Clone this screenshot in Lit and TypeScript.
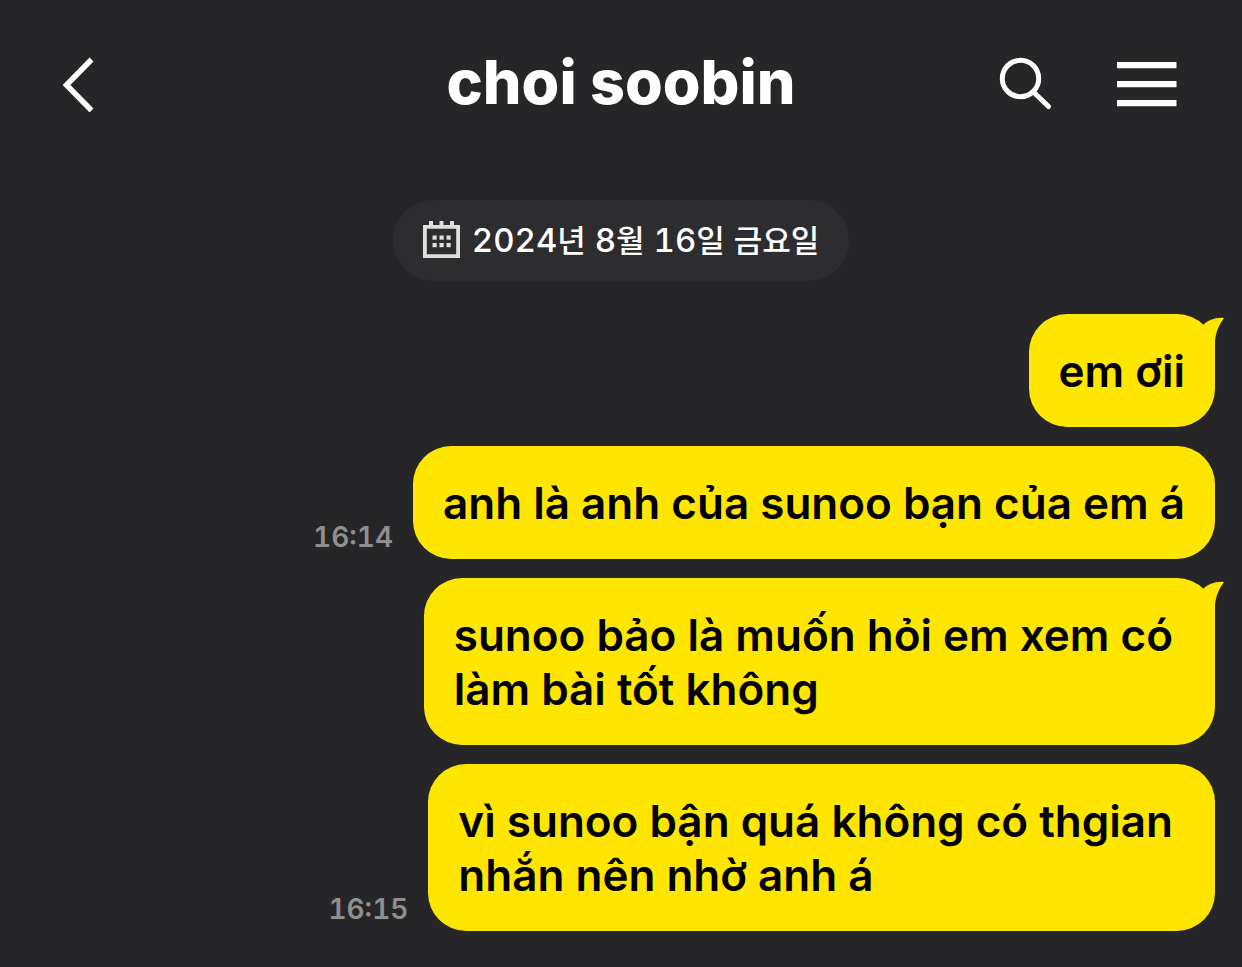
import { LitElement, html, css, svg, nothing } from "lit";
import { customElement, property } from "lit/decorators.js";

interface Message {
  text: string;
  time?: string;
  tail?: boolean;
}

const MESSAGES: Message[] = [
  { text: "em ơii", tail: true },
  { text: "anh là anh của sunoo bạn của em á", time: "16:14" },
  { text: "sunoo bảo là muốn hỏi em xem có\nlàm bài tốt không", tail: true },
  { text: "vì sunoo bận quá không có thgian\nnhắn nên nhờ anh á", time: "16:15" },
];

@customElement("chat-header")
export class ChatHeader extends LitElement {
  @property() name = "";

  static styles = css`
    :host {
      display: block;
    }
    .bar {
      display: grid;
      grid-template-columns: 1fr auto 1fr;
      align-items: center;
      padding: 44px 60px 0;
    }
    .title {
      margin: 0;
      font-size: 61px;
      line-height: 76px;
      font-weight: 800;
      color: #fff;
    }
    .actions {
      display: flex;
      justify-content: flex-end;
      gap: 58px;
    }
    .icon {
      display: block;
      padding: 0;
      border: 0;
      background: none;
      color: #fff;
      cursor: pointer;
    }
    .back {
      justify-self: start;
    }
    .icon svg {
      display: block;
    }
  `;

  render() {
    return html`
      <header class="bar">
        <button class="icon back" aria-label="Back">
          <svg width="40" height="60" viewBox="0 0 40 60" fill="none" stroke="currentColor" stroke-width="5.5">
            <path d="M31.5 7.5 L6.5 33 L31.5 58.5" />
          </svg>
        </button>
        <h1 class="title">${this.name}</h1>
        <div class="actions">
          <button class="icon" aria-label="Search">
            <svg width="60" height="60" viewBox="0 0 60 60" fill="none" stroke="currentColor" stroke-width="5">
              <circle cx="22.5" cy="26.5" r="18.2" />
              <path d="M35.5 40 L50.5 54.5" stroke-linecap="round" />
            </svg>
          </button>
          <button class="icon" aria-label="Menu">
            <svg width="66" height="60" viewBox="0 0 66 60" fill="currentColor">
              <path d="M1 10h59.5v6.3H1zM1 29h59.5v6.3H1zM1 48h59.5v6.3H1z" />
            </svg>
          </button>
        </div>
      </header>
    `;
  }
}

@customElement("date-pill")
export class DatePill extends LitElement {
  @property({ type: Number }) year = 0;
  @property({ type: Number }) month = 0;
  @property({ type: Number }) day = 0;
  @property() weekday = "";

  static styles = css`
    :host {
      display: flex;
      justify-content: center;
    }
    .pill {
      display: flex;
      align-items: center;
      gap: 12px;
      padding: 16px 30px;
      border-radius: 40px;
      background: #2d2d2f;
      color: #fff;
      font-size: 33px;
      line-height: 48px;
      font-weight: 500;
      font-variant-numeric: tabular-nums;
    }
    .unit {
      font-size: 31px;
    }
    .calendar {
      display: block;
      color: #dededf;
    }
  `;

  render() {
    return html`
      <div class="pill">
        <svg class="calendar" width="37" height="39" viewBox="0 0 37 39" fill="currentColor" aria-hidden="true">
          <path fill-rule="evenodd" d="M0 4h37v33H0zM3.8 7.8v25.4h29.4V7.8z" />
          <path d="M6 0h4v5h-4zM16.5 0h4v5h-4zM27 0h4v5h-4z" />
          ${[9.5, 16.5, 23.5].map((x) =>
            [14.5, 22].map((y) => svg`<rect x=${x} y=${y} width="4.2" height="4.2" />`)
          )}
        </svg>
        <time
          >${this.year}<span class="unit">년</span> ${this.month}<span class="unit">월</span> ${this.day}<span
            class="unit"
            >일</span
          >
          <span class="unit">${this.weekday}</span></time
        >
      </div>
    `;
  }
}

@customElement("chat-bubble")
export class ChatBubble extends LitElement {
  @property({ attribute: false }) message!: Message;

  static styles = css`
    :host {
      display: flex;
      justify-content: flex-end;
      align-items: flex-end;
      gap: 20px;
    }
    .time {
      padding-bottom: 4px;
      color: #8f8f90;
      font-size: 28px;
      line-height: 36px;
      font-weight: 600;
      font-variant-numeric: tabular-nums;
    }
    .bubble {
      position: relative;
      padding: 30px 30px 29px;
      border-radius: 38px;
      background: #ffe600;
      color: #000;
    }
    .text {
      margin: 0;
      white-space: pre-line;
      font-size: 44px;
      line-height: 54px;
      font-weight: 600;
    }
    .multiline {
      padding-right: 42px;
    }
    .tail {
      position: absolute;
      top: 0;
      right: -10px;
      fill: #ffe600;
    }
  `;

  render() {
    const { text, time, tail } = this.message;
    return html`
      ${time ? html`<time class="time">${time}</time>` : nothing}
      <div class="bubble ${text.includes("\n") ? "multiline" : ""}">
        ${tail
          ? html`<svg class="tail" width="34" height="40" viewBox="0 0 34 40" aria-hidden="true">
              <path d="M12 11 C17 6 25 3 33 4 C28 11 24 19 24 30 V40 H12 Z" />
            </svg>`
          : nothing}
        <p class="text">${text}</p>
      </div>
    `;
  }
}

@customElement("app-root")
export class AppRoot extends LitElement {
  static styles = css`
    :host {
      display: block;
      box-sizing: border-box;
      min-height: 100vh;
      background: #262628;
      font-family: Inter, "Noto Sans CJK KR", sans-serif;
    }
    .thread {
      display: flex;
      flex-direction: column;
      gap: 19px;
      padding: 33px 27px;
    }
    .date {
      margin-top: 80px;
    }
  `;

  render() {
    return html`
      <chat-header name="choi soobin"></chat-header>
      <main>
        <date-pill class="date" year="2024" month="8" day="16" weekday="금요일"></date-pill>
        <section class="thread">
          ${MESSAGES.map((m) => html`<chat-bubble .message=${m}></chat-bubble>`)}
        </section>
      </main>
    `;
  }
}
